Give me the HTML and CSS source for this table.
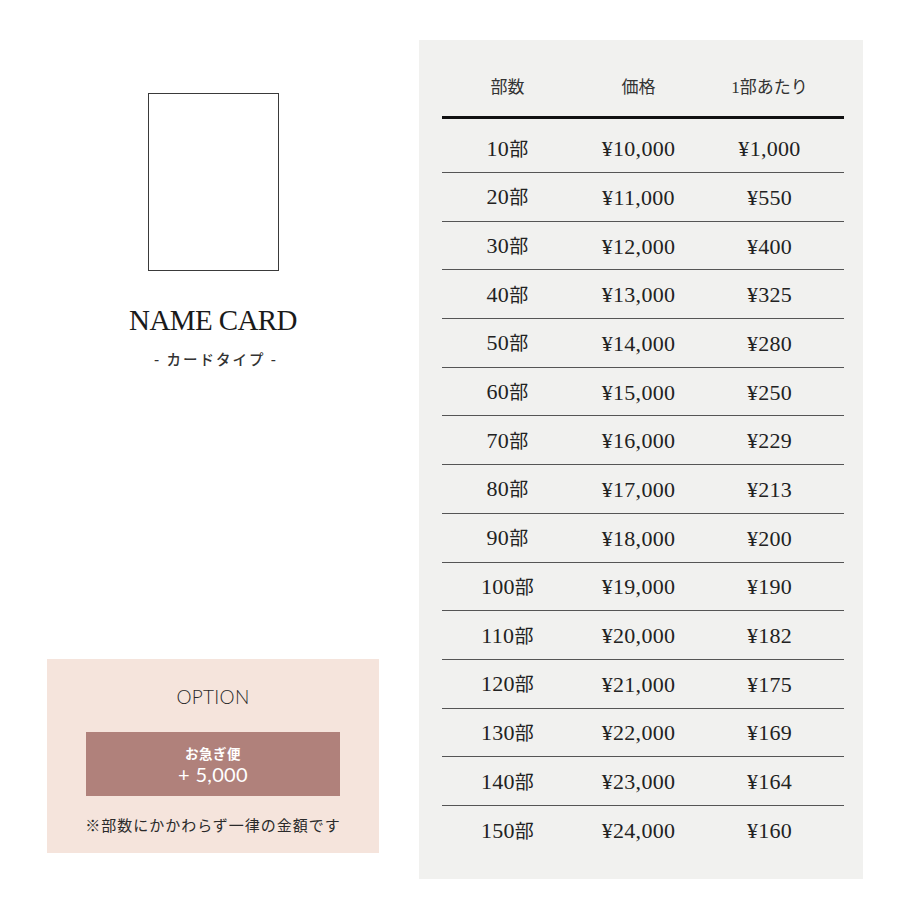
FILE: index.html
```html
<!DOCTYPE html>
<html lang="ja">
<head>
<meta charset="utf-8">
<title>NAME CARD</title>
<link rel="stylesheet" href="styles.css">
</head>
<body>
<div class="page">
  <section class="left">
    <div class="card-shape"></div>
    <h1 class="title">NAME CARD</h1>
    <p class="subtitle">- カードタイプ -</p>
    <div class="option">
      <p class="option-title">OPTION</p>
      <div class="option-btn">
        <span class="btn-label">お急ぎ便</span>
        <span class="btn-price">+ 5,000</span>
      </div>
      <p class="option-note">※部数にかかわらず一律の金額です</p>
    </div>
  </section>
  <section class="panel">
    <div class="thead">
      <span>部数</span><span>価格</span><span>1部あたり</span>
    </div>
    <div class="tbody">
      <div class="row"><span>10<span class="u">部</span></span><span>¥10,000</span><span>¥1,000</span></div>
      <div class="row"><span>20<span class="u">部</span></span><span>¥11,000</span><span>¥550</span></div>
      <div class="row"><span>30<span class="u">部</span></span><span>¥12,000</span><span>¥400</span></div>
      <div class="row"><span>40<span class="u">部</span></span><span>¥13,000</span><span>¥325</span></div>
      <div class="row"><span>50<span class="u">部</span></span><span>¥14,000</span><span>¥280</span></div>
      <div class="row"><span>60<span class="u">部</span></span><span>¥15,000</span><span>¥250</span></div>
      <div class="row"><span>70<span class="u">部</span></span><span>¥16,000</span><span>¥229</span></div>
      <div class="row"><span>80<span class="u">部</span></span><span>¥17,000</span><span>¥213</span></div>
      <div class="row"><span>90<span class="u">部</span></span><span>¥18,000</span><span>¥200</span></div>
      <div class="row"><span>100<span class="u">部</span></span><span>¥19,000</span><span>¥190</span></div>
      <div class="row"><span>110<span class="u">部</span></span><span>¥20,000</span><span>¥182</span></div>
      <div class="row"><span>120<span class="u">部</span></span><span>¥21,000</span><span>¥175</span></div>
      <div class="row"><span>130<span class="u">部</span></span><span>¥22,000</span><span>¥169</span></div>
      <div class="row"><span>140<span class="u">部</span></span><span>¥23,000</span><span>¥164</span></div>
      <div class="row"><span>150<span class="u">部</span></span><span>¥24,000</span><span>¥160</span></div>
    </div>
  </section>
</div>
</body>
</html>
```

FILE: styles.css
```css
* { box-sizing: border-box; }
html, body { margin: 0; padding: 0; background: #fff; }
body {
  width: 920px;
  height: 920px;
  color: #222;
  font-family: "Noto Sans CJK JP", sans-serif;
}
.page {
  display: flex;
  gap: 40px;
  padding: 40px 57px 0 47px;
}
.left {
  width: 332px;
  display: flex;
  flex-direction: column;
  align-items: center;
}
.card-shape {
  margin-top: 53px;
  width: 131px;
  height: 178px;
  border: 1.5px solid #3a3a3a;
}
.title {
  margin: 31px 0 0;
  font-family: "Liberation Serif", serif;
  font-weight: 400;
  font-size: 29px;
  line-height: 36px;
  letter-spacing: -0.6px;
  color: #1a1a1a;
}
.subtitle {
  margin: 11px 0 0 6px;
  font-size: 14.5px;
  line-height: 20px;
  letter-spacing: 2px;
  font-weight: 500;
  color: #333;
}
.option {
  margin-top: auto;
  margin-bottom: 26px;
  width: 332px;
  height: 194px;
  background: #f5e4dc;
  display: flex;
  flex-direction: column;
  align-items: center;
}
.option-title {
  margin: 26px 0 0;
  font-family: "Lato", sans-serif;
  font-weight: 300;
  font-size: 19px;
  line-height: 24px;
  letter-spacing: 0.3px;
  color: #2a2a2a;
}
.option-btn {
  margin-top: 23px;
  width: 254px;
  height: 64px;
  padding-top: 3px;
  background: #b0817b;
  color: #fff;
  display: flex;
  flex-direction: column;
  align-items: center;
  justify-content: center;
}
.btn-label {
  font-size: 13.5px;
  font-weight: 700;
  line-height: 18px;
  letter-spacing: 0.5px;
}
.btn-price {
  font-family: "Lato", sans-serif;
  font-size: 20px;
  line-height: 25px;
  letter-spacing: 0.3px;
}
.option-note {
  margin: 19px 0 0;
  font-size: 15px;
  line-height: 20px;
  letter-spacing: 1px;
  color: #2a2a2a;
}
.panel {
  width: 444px;
  height: 839px;
  background: #f1f1ef;
  padding: 0 19px 0 23px;
  font-family: "Liberation Serif", "Noto Sans CJK JP", serif;
}
.thead, .row {
  display: grid;
  grid-template-columns: 131px 131px 131px;
  align-items: center;
  justify-items: center;
}
.thead {
  height: 79px;
  padding-top: 14px;
  border-bottom: 3px solid #111;
  font-size: 17px;
  color: #333;
}
.tbody { padding-top: 5px; }
.row {
  height: 48.7px;
  border-bottom: 1px solid #555;
  font-size: 22px;
  line-height: 28px;
  letter-spacing: 0.3px;
  color: #222;
  padding-top: 2px;
}
.u {
  font-size: 19px;
}
.row:first-child { height: 49px; }
.row:last-child { border-bottom: none; }
```
